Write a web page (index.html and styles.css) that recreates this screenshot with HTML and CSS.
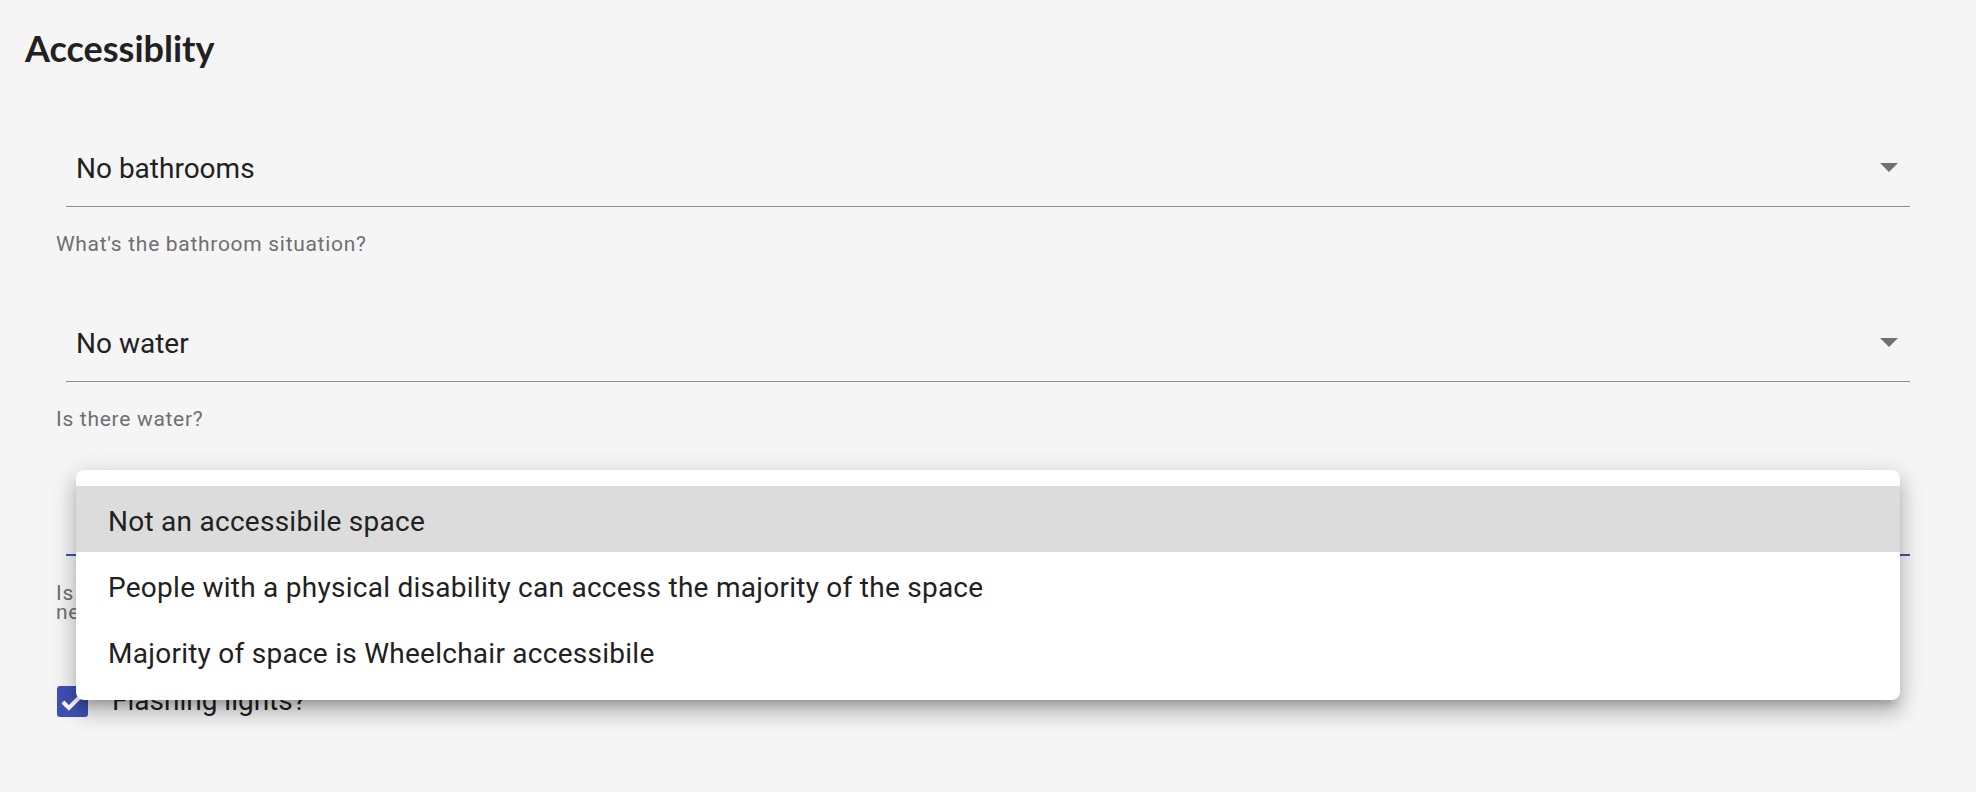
FILE: index.html
```html
<!DOCTYPE html>
<html lang="en">
<head>
<meta charset="utf-8">
<title>Accessiblity</title>
<link rel="stylesheet" href="styles.css">
</head>
<body>
<div class="page">
  <h2 class="title">Accessiblity</h2>
  <div class="form">
    <div class="field">
      <div class="select">
        <span class="value">No bathrooms</span>
        <span class="arrow"></span>
      </div>
      <div class="helper">What's the bathroom situation?</div>
    </div>
    <div class="field">
      <div class="select">
        <span class="value">No water</span>
        <span class="arrow"></span>
      </div>
      <div class="helper">Is there water?</div>
    </div>
    <div class="field">
      <div class="select focused">
        <span class="value">Not an accessibile space</span>
        <span class="arrow"></span>
      </div>
      <div class="helper">Is the space accessible to people with physical disabilities? Think about steps, ramps, doorways and elevators,<br>negotiating the space and anything else that matters.</div>
    </div>
    <label class="check-row">
      <span class="checkbox">
        <svg viewBox="0 0 24 24" width="31" height="31"><path d="M4.6 12.4l4.6 4.6 10.2-10.2" fill="none" stroke="#fff" stroke-width="3.1"/></svg>
      </span>
      <span class="check-label">Flashing lights?</span>
    </label>
  </div>
  <div class="menu">
    <div class="option active">Not an accessibile space</div>
    <div class="option">People with a physical disability can access the majority of the space</div>
    <div class="option">Majority of space is Wheelchair accessibile</div>
  </div>
</div>
</body>
</html>
```
FILE: styles.css
```css
html, body {
  margin: 0;
  padding: 0;
  background: #f5f5f5;
}
body {
  font-family: Roboto, "Liberation Sans", Arial, sans-serif;
  color: #212121;
  width: 1976px;
  height: 792px;
  overflow: hidden;
}
.page {
  position: relative;
  padding: 26px 0 0 25px;
}
.title {
  font-family: Lato, "Liberation Sans", sans-serif;
  font-weight: 700;
  font-size: 36px;
  line-height: 44px;
  margin: 0;
  color: #212121;
}
.form {
  margin-top: 82px;
  margin-left: 31px;
  width: 1854px;
}
.field {
  margin-bottom: 73px;
}
.select {
  position: relative;
  margin-left: 10px;
  padding: 1px 0 21px 10px;
  border-bottom: 1px solid #8e8e8e;
}
.select.focused {
  border-bottom: 2px solid #3f51b5;
  padding-bottom: 20px;
  padding-top: 0;
}
.value {
  display: block;
  font-size: 28px;
  line-height: 32px;
  color: #212121;
}
.arrow {
  position: absolute;
  right: 12px;
  top: 11px;
  width: 0;
  height: 0;
  border-left: 9px solid transparent;
  border-right: 9px solid transparent;
  border-top: 9px solid #717171;
}
.helper {
  margin-top: 28px;
  font-size: 21px;
  line-height: 19px;
  letter-spacing: 0.7px;
  color: #6f6f6f;
}
.field:nth-child(3) {
  margin-bottom: 63px;
}
.check-row {
  display: flex;
  align-items: center;
  gap: 24px;
  margin-left: 1px;
}
.checkbox {
  width: 31px;
  height: 31px;
  border-radius: 3px;
  background: #3f51b5;
  display: flex;
}
.check-label {
  font-size: 28px;
  line-height: 32px;
  color: #212121;
}
.menu {
  position: absolute;
  left: 76px;
  top: 470px;
  width: 1824px;
  padding: 16px 0;
  background: #fff;
  border-radius: 8px;
  box-shadow: 0 9px 9px -5px rgba(0,0,0,.2), 0 14px 18px 2px rgba(0,0,0,.14), 0 5px 25px 4px rgba(0,0,0,.12);
}
.option {
  box-sizing: border-box;
  height: 66px;
  padding-top: 5px;
  line-height: 61px;
  padding-left: 32px;
  font-size: 28px;
  letter-spacing: 0.26px;
  color: #212121;
  white-space: nowrap;
}
.option.active {
  background: #dcdcdc;
}
```
